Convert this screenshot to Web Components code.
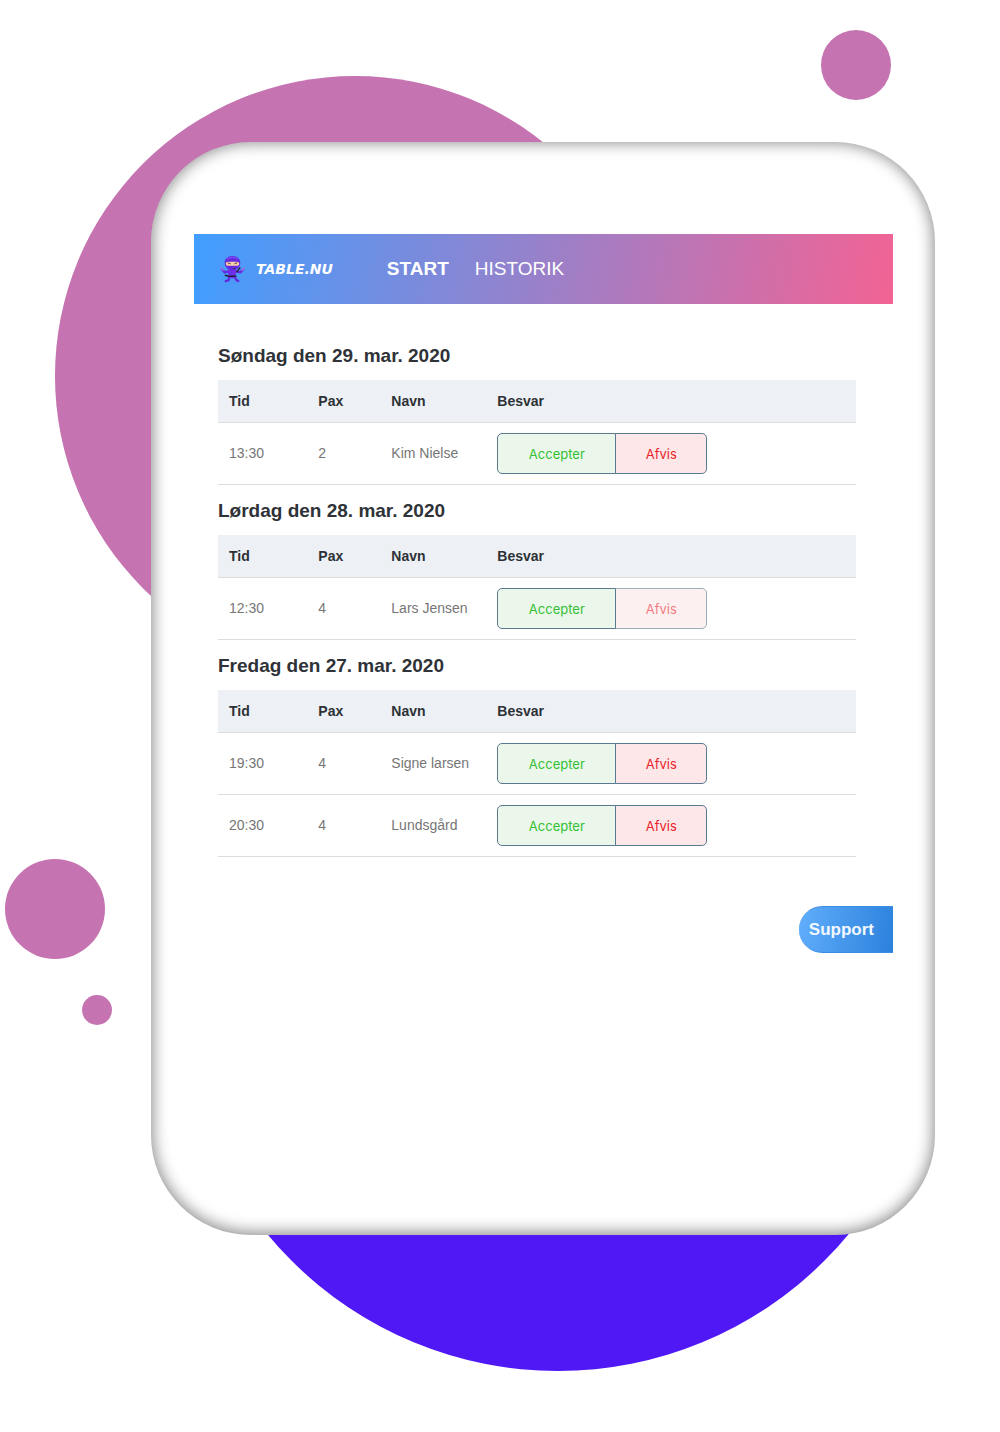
<!DOCTYPE html>
<html lang="da">
<head>
<meta charset="utf-8">
<meta name="viewport" content="width=device-width, initial-scale=1">
<title>Table.nu</title>
<style>
  body { margin: 0; background: #fff; font-family: "Liberation Sans", Arial, sans-serif; }
</style>
</head>
<body>
<table-stage>
  <tablet-frame>
    <app-bar>
      <nav-link href="#start" current>START</nav-link>
      <nav-link href="#historik">HISTORIK</nav-link>
    </app-bar>
    <booking-list></booking-list>
    <support-tab>Support</support-tab>
  </tablet-frame>
</table-stage>

<script>
class BaseElement extends HTMLElement {
  connectedCallback() {
    if (this.shadowRoot) return;
    this.attachShadow({ mode: 'open' }).innerHTML = this.render();
  }
}

// Page backdrop: coloured discs on a free canvas behind the tablet.
customElements.define('table-stage', class extends BaseElement {
  render() {
    return `
      <style>
        :host { display: block; position: relative; overflow: hidden; isolation: isolate; padding: 142px 65px 197px 151px; }
        i { position: absolute; z-index: -1; border-radius: 50%; background: #c573b1; width: var(--d); height: var(--d); }
        .big { --d: 600px; left: 55px; top: 76px; }
        .top { --d: 70px; right: 109px; top: 30px; }
        .mid { --d: 100px; left: 5px; top: 859px; }
        .dot { --d: 30px; left: 82px; top: 995px; }
        .blue { --d: 754px; left: 181px; bottom: 61px; background: #4f18f5; }
      </style>
      <i class="big"></i><i class="top"></i><i class="mid"></i><i class="dot"></i><i class="blue"></i>
      <slot></slot>`;
  }
});

customElements.define('tablet-frame', class extends BaseElement {
  render() {
    return `
      <style>
        :host { display: flex; flex-direction: column; box-sizing: border-box; min-height: 1093px;
          padding: 92px 42px 92px 43px; border-radius: 100px; background: #fff;
          box-shadow: inset 0 -1px 15px 2px rgba(0,0,0,.45); }
      </style>
      <slot></slot>`;
  }
});

customElements.define('app-bar', class extends BaseElement {
  render() {
    return `
      <style>
        :host { display: flex; align-items: center; height: 70px; padding-left: 26px; box-sizing: border-box;
          background: linear-gradient(100deg, #409eff, #f36394); }
        a { display: flex; align-items: center; gap: 10px; margin-right: 54px; color: #fff; text-decoration: none;
          font: italic bold 14px/20px "DejaVu Sans", Verdana, sans-serif; }
        nav { display: flex; gap: 26px; }
      </style>
      <a href="#">
        <svg width="26" height="28" viewBox="1 0 27 29" aria-hidden="true">
          <g fill="none" stroke="#6429df" stroke-width="2.500" stroke-linecap="round" stroke-linejoin="round">
            <path d="M10 17 6 18 3 15"/><path d="M18 17 22 18 25 15"/>
            <path d="M11 22 10 26 7 27"/><path d="M16 22 18 26 20 27"/>
          </g>
          <path d="M9 15h9l-1 9h-7z" fill="#6f30e9"/>
          <path d="M2 13 4 16M26 13 24 16" stroke="#9a7ae0" stroke-width="1.500" stroke-linecap="round"/>
          <path d="M14 1C8 1 5.500 5 6 9c.5 4 4 7 8 7s7.500-3 8-7c.5-4-2-8-8-8z" fill="#6529e2"/>
          <path d="M8 4c3-2 9-2 12 0" fill="none" stroke="#8552f0" stroke-width="1"/>
          <rect x="7" y="7" width="14" height="4" rx="2" fill="#f8cfa4"/>
          <path d="m9 8 3 1M19 8l-3 1" stroke="#4a3350" stroke-width="1"/>
          <path d="m12 13 3 1 3-1-2 2z" fill="#453052"/>
          <path d="m18 18 4-5" stroke="#302044" stroke-width="1.500"/>
          <path d="M9 22h9M10 22l-4-1" stroke="#251a3b" stroke-width="1.500"/>
        </svg>
        <span>TABLE.NU</span>
      </a>
      <nav><slot></slot></nav>`;
  }
});

customElements.define('nav-link', class extends BaseElement {
  render() {
    return `
      <style>
        :host { display: block; }
        a { color: #fff; font-size: 19px; line-height: 24px; text-decoration: none; }
        :host([current]) a { font-weight: bold; }
      </style>
      <a href="${this.getAttribute('href')}"><slot></slot></a>`;
  }
});

customElements.define('answer-buttons', class extends BaseElement {
  render() {
    return `
      <style>
        :host { display: flex; }
        button { box-sizing: border-box; height: 41px; margin: 0; padding: 0; border: 1px solid #5a7a91;
          font: 13px/20px Inter, "Liberation Sans", sans-serif; }
        .yes { width: 119px; border-radius: 5px 0 0 5px; background: #eaf7ea; color: #34bf34; position: relative; }
        .no { width: 92px; margin-left: -1px; border-radius: 0 5px 5px 0; background: #fde7e8; color: #ea1f2d; }
        .no:disabled { opacity: .6; }
      </style>
      <button class="yes" type="button">Accepter</button><button class="no" type="button" ${this.hasAttribute('rejected') ? 'disabled' : ''}>Afvis</button>`;
  }
});

customElements.define('booking-day', class extends BaseElement {
  render() {
    const rows = JSON.parse(this.getAttribute('rows'));
    return `
      <style>
        :host { display: block; }
        h2 { margin: 0 0 12px; color: #2f3338; font-size: 19px; line-height: 24px; }
        table { width: 100%; table-layout: fixed; border-collapse: separate; border-spacing: 0; font-size: 14px; line-height: 20px; }
        th, td { box-sizing: border-box; padding: 0 0 0 11px; border-bottom: 1px solid #dcdddd; text-align: left; }
        th { height: 43px; background: #edf1f6; color: #2d3136; }
        td { height: 62px; color: #767676; }
        td:not(:last-child) { padding-bottom: 2px; }
        th:nth-child(1) { width: 14%; } th:nth-child(2) { width: 73px; } th:nth-child(3) { width: 106px; }
      </style>
      <h2>${this.getAttribute('date')}</h2>
      <table>
        <thead><tr><th scope="col">Tid</th><th scope="col">Pax</th><th scope="col">Navn</th><th scope="col">Besvar</th></tr></thead>
        <tbody>${rows.map(([t, p, n, r]) => `<tr><td>${t}</td><td>${p}</td><td>${n}</td><td><answer-buttons ${r ? 'rejected' : ''}></answer-buttons></td></tr>`).join('')}</tbody>
      </table>`;
  }
});

customElements.define('booking-list', class extends BaseElement {
  render() {
    const days = [
      ['Søndag den 29. mar. 2020', [['13:30', 2, 'Kim Nielse']]],
      ['Lørdag den 28. mar. 2020', [['12:30', 4, 'Lars Jensen', true]]],
      ['Fredag den 27. mar. 2020', [['19:30', 4, 'Signe larsen'], ['20:30', 4, 'Lundsgård']]]
    ];
    return `
      <style>
        :host { display: flex; flex-direction: column; gap: 14px; padding: 40px 37px 49px 24px; }
      </style>
      ${days.map(([d, r]) => `<booking-day date="${d}" rows='${JSON.stringify(r)}'></booking-day>`).join('')}`;
  }
});

customElements.define('support-tab', class extends BaseElement {
  render() {
    return `
      <style>
        :host { display: block; align-self: flex-end; }
        button { display: block; height: 47px; margin: 0; padding: 0 19px 0 10px; border: 1px solid #3b8ee4; border-width: 1px 0 1px 0;
          border-radius: 24px 0 0 24px; background: linear-gradient(100deg, #61aefc, #2b81dc); color: #f2f8ff;
          font: bold 17px/24px "Liberation Sans", Arial, sans-serif; }
      </style>
      <button type="button"><slot></slot></button>`;
  }
});
</script>
</body>
</html>
